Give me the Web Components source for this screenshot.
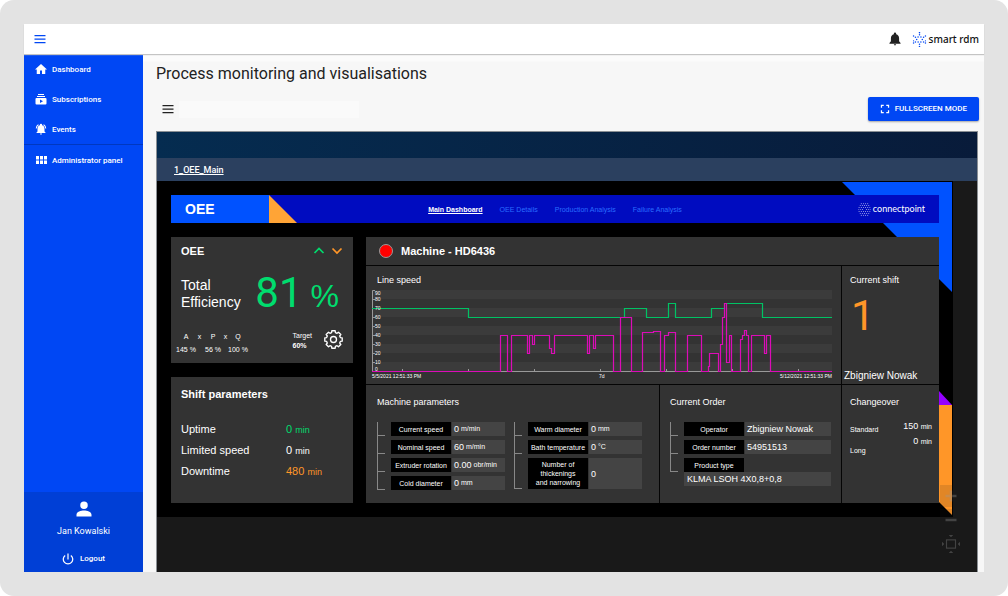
<!DOCTYPE html>
<html lang="en">
<head>
<meta charset="UTF-8">
<meta name="viewport" content="width=device-width, initial-scale=1">
<title>Process monitoring and visualisations</title>
<style>
    body {
        margin: 0;
        background: #fff;
        font-family: Roboto, 'Noto Sans', sans-serif;
    }
</style>
</head>
<body>
<app-shell>
    <top-bar slot="header"></top-bar>
    <side-nav slot="nav">
        <nav-item icon="home">Dashboard</nav-item>
        <nav-item icon="subscriptions">Subscriptions</nav-item>
        <nav-item icon="events">Events</nav-item>
        <nav-item icon="grid" divided>Administrator panel</nav-item>
    </side-nav>
    <page-toolbar heading="Process monitoring and visualisations"></page-toolbar>
    <scada-viewer tab="1_OEE_Main">
        <oee-banner heading="OEE"></oee-banner>
        <div-split>
            <efficiency-card slot="side" value="81" target="60%"></efficiency-card>
            <shift-card slot="side"></shift-card>
            <machine-panel name="Machine - HD6436">
                <trend-chart slot="chart"></trend-chart>
                <shift-info slot="shift" number="1" operator="Zbigniew Nowak"></shift-info>
                <param-list slot="params" rows='[["Current speed","0","m/min"],["Nominal speed","60","m/min"],["Extruder rotation","0.00","obr/min"],["Cold diameter","0","mm"]]'></param-list>
                <param-list slot="params" rows='[["Warm diameter","0","mm"],["Bath temperature","0","°C"],["Number of\nthickenings\nand narrowing","0",""]]'></param-list>
                <param-list slot="order" rows='[["Operator","Zbigniew Nowak",""],["Order number","54951513",""],["Product type",null,""]]' note="KLMA LSOH 4X0,8+0,8"></param-list>
                <changeover-info slot="changeover"></changeover-info>
            </machine-panel>
        </div-split>
    </scada-viewer>
</app-shell>

<script>
// Outline of a cog wheel with eight soft teeth
function gearPath() {
    const points = [];
    for (let i = 0; i < 8; i++) {
        const a = i * Math.PI / 4;
        [[-0.27, 9], [-0.19, 11.2], [0.19, 11.2], [0.27, 9]].forEach(([d, r]) => {
            points.push(`${(12 + r * Math.cos(a + d)).toFixed(2)} ${(12 + r * Math.sin(a + d)).toFixed(2)}`);
        });
    }
    return `M${points.join('L')}z`;
}

// Icon paths on a 24px grid
const ICONS = {
    menu: '<path d="M1 4h22v2.500H1zM1 11h22v2.500H1zM1 18h22v2.500H1z"/>',
    home: '<path d="M10 22v-7h4v7h6.500v-9H24L12 2 0 13h3.500v9z"/>',
    subscriptions: '<path d="M20 8H4V6h16zm-2-6H6v2h12zm5 10v9a2 2 0 0 1-2 2H3a2 2 0 0 1-2-2v-9a2 2 0 0 1 2-2h18a2 2 0 0 1 2 2zm-7 4.500-6-3.300v6.600z"/>',
    events: '<path d="M7.580 4.080 6.150 2.650A10.500 10.500 0 0 0 1.500 11h2a8.400 8.400 0 0 1 4.080-6.920zM20.500 11h2a10.500 10.500 0 0 0-4.650-8.350l-1.430 1.430A8.500 8.500 0 0 1 20.500 11zM19 11.500c0-3.400-1.600-6.200-4.800-7V3.500a2.200 2.200 0 0 0-4.400 0v1C6.600 5.300 5 8.100 5 11.500V17l-2 2v1h18v-1l-2-2zM12 23.500a2.200 2.200 0 0 0 2.100-2.300H9.900A2.200 2.200 0 0 0 12 23.500z"/>',
    grid: '<path d="M2 4h6v7H2zM10 4h6v7h-6zM18 4h6v7h-6zM2 13h6v7H2zM10 13h6v7h-6zM18 13h6v7h-6z"/>',
    bell: '<path d="M12 23a2 2 0 0 0 2-2h-4a2 2 0 0 0 2 2zm7-7v-5.500c0-3.300-1.800-6-5-6.800V3a2 2 0 0 0-4 0v.7c-3.200.8-5 3.500-5 6.800V16l-2.500 3v1h19v-1z"/>',
    user: '<path d="M12 12a5 5 0 1 0 0-10 5 5 0 0 0 0 10zm0 2c-4 0-10 1.800-10 5.500V22h20v-2.500C22 15.800 16 14 12 14z"/>',
    power: '<path d="M13.200 1h-2.400v12h2.400zm5.300 3-1.600 1.800a8.200 8.200 0 1 1-9.800 0L5.500 4a10.700 10.700 0 1 0 13 0z"/>',
    fullscreen: '<path d="M2 2h7v3H5v4H2zM15 2h7v7h-3V5h-4zM2 15h3v4h4v3H2zM19 15h3v7h-7v-3h4z"/>',
    up: '<path d="M3 16 12 7l9 9" fill="none" stroke="currentColor" stroke-width="3.500"/>',
    down: '<path d="m3 7 9 9 9-9" fill="none" stroke="currentColor" stroke-width="3.500"/>',
    gear: `<g fill="none" stroke="currentColor" stroke-width="1.700" stroke-linejoin="round"><circle cx="12" cy="12" r="3.800"/><path d="${gearPath()}"/></g>`,
    plus: '<path d="M9.500 1h5v8.500H23v5h-8.500V23h-5v-8.500H1v-5h8.500z"/>',
    minus: '<path d="M1 9.500h22v5H1z"/>',
    fit: '<rect x="6" y="6.500" width="12" height="11" fill="none" stroke="currentColor" stroke-width="1.500"/><path d="M9 0h6l-3 3zM9 24h6l-3-3zM0 9v6l3-3zM24 9v6l-3-3z"/>'
};

// Shared by every element below: fills an open shadow root with markup
class BaseElement extends HTMLElement {
    constructor() {
        super();
        this.attachShadow({ mode: 'open' });
    }
    connectedCallback() {
        this.shadowRoot.innerHTML = this.render();
    }
}

class UiIcon extends BaseElement {
    render() {
        return `
            <style>
                :host { display: inline-block; width: 12px; height: 12px; flex-shrink: 0; }
                svg { display: block; width: 100%; height: 100%; fill: currentColor; }
            </style>
            <svg viewBox="0 0 24 24" aria-hidden="true">${ICONS[this.getAttribute('name')]}</svg>
        `;
    }
}

// Hexagonal dot mark, used in both brand logos
class DotMark extends BaseElement {
    render() {
        const dense = this.hasAttribute('dense');
        const dots = [];
        if (dense) {
            for (let row = -3; row <= 3; row++) {
                for (let col = -3; col <= 3; col++) {
                    const x = col * 4 + (row % 2 ? 2 : 0);
                    const y = row * 3.6;
                    if (Math.abs(x) + Math.abs(y) * 0.58 < 13 && Math.abs(x) + Math.abs(y) > 3) {
                        dots.push([x, y, 0.9]);
                    }
                }
            }
        } else {
            for (let i = 0; i < 6; i++) {
                const a = Math.PI / 2 + i * Math.PI / 3;
                const b = a + Math.PI / 6;
                dots.push([11 * Math.cos(a), 11 * Math.sin(a), 1.2]);
                dots.push([7.5 * Math.cos(a), 7.5 * Math.sin(a), 1.2]);
                dots.push([4.5 * Math.cos(b), 4.5 * Math.sin(b), 1.2]);
            }
            dots.push([-9.5, 2, 1], [9.5, 2, 1]);
        }
        return `
            <style>
                :host { display: inline-block; width: 15px; height: 15px; flex-shrink: 0; }
                svg { display: block; width: 100%; height: 100%; fill: currentColor; }
            </style>
            <svg viewBox="-12 -12 24 24" aria-hidden="true">
                ${dots.map(d => `<circle cx="${d[0].toFixed(1)}" cy="${d[1].toFixed(1)}" r="${d[2]}"/>`).join('')}
            </svg>
        `;
    }
}

class AppShell extends BaseElement {
    render() {
        return `
            <style>
                :host {
                    display: flex;
                    box-sizing: border-box;
                    min-height: 100vh;
                    padding: 24px;
                    background: #e3e3e3;
                    border-radius: 14px;
                }
                .app {
                    flex: 1;
                    display: flex;
                    flex-direction: column;
                    min-width: 0;
                    background: #f7f7f7;
                }
                .body { flex: 1; display: flex; }
                main {
                    flex: 1;
                    display: flex;
                    flex-direction: column;
                    min-width: 0;
                    padding: 0 6px 0 13px;
                    background: linear-gradient(#fbfbfb 7px, #f7f7f7 8px);
                }
            </style>
            <div class="app">
                <slot name="header"></slot>
                <div class="body">
                    <slot name="nav"></slot>
                    <main><slot></slot></main>
                </div>
            </div>
        `;
    }
}

class TopBar extends BaseElement {
    render() {
        return `
            <style>
                :host {
                    display: flex;
                    align-items: center;
                    height: 30px;
                    padding: 0 5px 0 10px;
                    background: #fff;
                    box-shadow: 0 1px 1px #c4c4c4;
                    position: relative;
                }
                button {
                    display: flex;
                    padding: 0;
                    border: 0;
                    background: none;
                    color: #0047f4;
                }
                .menu { margin-right: auto; }
                .bell { color: #222; margin-right: 10px; }
                .bell ui-icon { width: 14px; height: 14px; }
                .brand {
                    display: flex;
                    align-items: center;
                    gap: 2px;
                    color: #111;
                    font: 500 10px/14px 'Noto Sans', sans-serif;
                    text-decoration: none;
                }
                dot-mark { color: #0047f4; }
            </style>
            <button class="menu" aria-label="Menu"><ui-icon name="menu"></ui-icon></button>
            <button class="bell" aria-label="Notifications"><ui-icon name="bell"></ui-icon></button>
            <a class="brand" href="#"><dot-mark></dot-mark>smart rdm</a>
        `;
    }
}

class SideNav extends BaseElement {
    render() {
        return `
            <style>
                :host {
                    display: flex;
                    flex-direction: column;
                    width: 119px;
                    flex-shrink: 0;
                    background: #0047f4;
                    color: #fff;
                }
                nav { flex: 1; }
                .account {
                    display: flex;
                    flex-direction: column;
                    align-items: center;
                    height: 80px;
                    background: #003fd6;
                    font-size: 9px;
                    line-height: 12px;
                }
                .account ui-icon { width: 18px; height: 18px; margin: 8px 0 7px; }
                button {
                    display: flex;
                    align-items: center;
                    gap: 6px;
                    margin-top: 16px;
                    padding: 0;
                    border: 0;
                    background: none;
                    color: inherit;
                    font: 500 8px/12px Roboto, sans-serif;
                }
                .account button ui-icon { width: 12px; height: 12px; margin: 0; }
            </style>
            <nav><slot></slot></nav>
            <div class="account">
                <ui-icon name="user"></ui-icon>
                <span>Jan Kowalski</span>
                <button><ui-icon name="power"></ui-icon>Logout</button>
            </div>
        `;
    }
}

class NavItem extends BaseElement {
    render() {
        return `
            <style>
                :host { display: block; }
                :host([divided]) { border-top: 1px solid #0038c0; }
                a {
                    display: flex;
                    align-items: center;
                    gap: 5px;
                    height: 30px;
                    padding-left: 11px;
                    color: #fff;
                    font-size: 8px;
                    font-weight: 500;
                    text-decoration: none;
                }
            </style>
            <a href="#"><ui-icon name="${this.getAttribute('icon')}"></ui-icon><slot></slot></a>
        `;
    }
}

class PageToolbar extends BaseElement {
    render() {
        return `
            <style>
                :host { display: block; }
                h1 {
                    margin: 10px 0 13px;
                    font-size: 16px;
                    font-weight: 400;
                    line-height: 20px;
                    color: #222;
                }
                .row {
                    display: flex;
                    align-items: center;
                    margin: 0 -1px 10px 0;
                }
                button { display: flex; align-items: center; border: 0; }
                .menu { padding: 0 5px 0 6px; background: none; color: #222; }
                input {
                    width: 180px;
                    height: 17px;
                    box-sizing: border-box;
                    border: 0;
                    background: #fafafa;
                }
                .full {
                    gap: 5px;
                    height: 24px;
                    margin-left: auto;
                    padding: 0 12px;
                    border-radius: 2px;
                    background: #0047f4;
                    box-shadow: 0 1px 2px #0005;
                    color: #fff;
                    font: 500 8px/12px Roboto, sans-serif;
                }
                .full ui-icon { width: 10px; height: 10px; }
            </style>
            <h1>${this.getAttribute('heading')}</h1>
            <div class="row">
                <button class="menu" aria-label="Views"><ui-icon name="menu"></ui-icon></button>
                <input type="text" aria-label="View name">
                <button class="full"><ui-icon name="fullscreen"></ui-icon>FULLSCREEN MODE</button>
            </div>
        `;
    }
}

class ScadaViewer extends BaseElement {
    render() {
        return `
            <style>
                :host {
                    flex: 1;
                    display: block;
                    position: relative;
                    border: 1px solid #8a8f94;
                    border-bottom: 0;
                    background: #191919;
                    font-family: 'Liberation Sans', Arial, sans-serif;
                    color: #fff;
                }
                .head { height: 26px; background: linear-gradient(90deg, #052c50, #081b3a); }
                .tabs {
                    display: flex;
                    align-items: center;
                    height: 23px;
                    padding-left: 17px;
                    background: #2b405f;
                }
                .tabs a { color: #fff; font: 500 9px/12px Roboto, sans-serif; }
                .canvas {
                    position: relative;
                    margin-right: 24px;
                    padding: 14px;
                    background: #000;
                }
                /* decorative corners that run behind the panels */
                .corner {
                    position: absolute;
                    right: 1px;
                    top: 1px;
                    width: 110px;
                    height: 110px;
                    background: #0052ff;
                    clip-path: polygon(0 0, 100% 0, 100% 100%);
                }
                .tip, .strip { position: absolute; right: 1px; width: 13px; }
                .tip {
                    bottom: 112px;
                    height: 14px;
                    background: #9500ff;
                    clip-path: polygon(0 0, 100% 100%, 0 100%);
                }
                .strip {
                    bottom: 2px;
                    height: 110px;
                    background: #ff9628;
                    clip-path: polygon(0 0, 100% 0, 100% 100%, 0 97px);
                }
                .content { position: relative; }
                .zoom {
                    position: absolute;
                    right: 15px;
                    bottom: 17px;
                    display: flex;
                    flex-direction: column;
                    gap: 2px;
                }
                .zoom button {
                    display: flex;
                    align-items: center;
                    justify-content: center;
                    width: 22px;
                    height: 22px;
                    padding: 0;
                    border: 0;
                    background: #1c1c1c22;
                    color: #9995;
                }
                .zoom .fit ui-icon { width: 18px; height: 18px; }
            </style>
            <div class="head"></div>
            <div class="tabs"><a href="#">${this.getAttribute('tab')}</a></div>
            <div class="canvas">
                <div class="corner"></div>
                <div class="tip"></div>
                <div class="strip"></div>
                <div class="content"><slot></slot></div>
            </div>
            <div class="zoom">
                <button aria-label="Zoom in"><ui-icon name="plus"></ui-icon></button>
                <button aria-label="Zoom out"><ui-icon name="minus"></ui-icon></button>
                <button class="fit" aria-label="Fit to screen"><ui-icon name="fit"></ui-icon></button>
            </div>
        `;
    }
}

class OeeBanner extends BaseElement {
    render() {
        return `
            <style>
                :host {
                    display: grid;
                    grid-template-columns: 1fr auto 1fr;
                    align-items: center;
                    height: 28px;
                    margin-bottom: 14px;
                    background: #000cc0;
                }
                .title { display: flex; }
                h2 {
                    width: 84px;
                    margin: 0;
                    padding-left: 14px;
                    background: #0052ff;
                    font-size: 14px;
                    line-height: 28px;
                }
                .wedge {
                    width: 28px;
                    height: 28px;
                    background: #ffa436;
                    clip-path: polygon(0 0, 100% 100%, 0 100%);
                }
                nav { display: flex; gap: 17px; font-size: 7px; }
                nav a { color: #2a6cff; text-decoration: none; }
                nav .active { color: #fff; font-weight: 700; text-decoration: underline; }
                .brand {
                    display: flex;
                    align-items: center;
                    justify-content: flex-end;
                    gap: 2px;
                    padding-right: 14px;
                    font: 400 9px/12px Lato, sans-serif;
                }
                dot-mark { width: 13px; height: 13px; }
            </style>
            <div class="title"><h2>${this.getAttribute('heading')}</h2><div class="wedge"></div></div>
            <nav>
                <a class="active" href="#">Main Dashboard</a>
                <a href="#">OEE Details</a>
                <a href="#">Production Analysis</a>
                <a href="#">Failure Analysis</a>
            </nav>
            <div class="brand"><dot-mark dense></dot-mark>connectpoint</div>
        `;
    }
}

class DivSplit extends BaseElement {
    render() {
        return `
            <style>
                :host {
                    display: grid;
                    grid-template-columns: 182fr 573fr;
                    gap: 13px;
                }
                .side { display: grid; grid-auto-rows: 1fr; gap: 14px; }
            </style>
            <div class="side"><slot name="side"></slot></div>
            <slot></slot>
        `;
    }
}

class EfficiencyCard extends BaseElement {
    render() {
        return `
            <style>
                :host {
                    display: flex;
                    flex-direction: column;
                    padding: 7px 10px;
                    background: #333;
                }
                header { display: flex; align-items: center; gap: 6px; }
                h3 { margin: 0 auto 0 0; font-size: 11px; line-height: 14px; }
                .up { color: #00dc6e; }
                .down { color: #ff9628; }
                .total {
                    display: flex;
                    align-items: center;
                    justify-content: space-between;
                    height: 72px;
                    padding-right: 4px;
                    font-size: 14px;
                    line-height: 17px;
                }
                .value { display: flex; align-items: baseline; gap: 8px; color: #00dc6e; line-height: 40px; }
                .value b { font: 400 42px/40px Roboto, sans-serif; }
                .value span { font-size: 32px; }
                footer { display: flex; align-items: flex-start; font-size: 7px; line-height: 13px; }
                .factors {
                    display: grid;
                    grid-template-columns: 20px 7px 20px 5px 20px;
                    margin: 0 auto 0 -5px;
                    text-align: center;
                    white-space: nowrap;
                }
                .factors span:nth-child(n+6) { grid-row: 2; }
                .target { line-height: 10px; margin: 1px 12px 0 0; }
                .target b { display: block; }
                .gear { width: 19px; height: 19px; }
            </style>
            <header>
                <h3>OEE</h3>
                <ui-icon class="up" name="up"></ui-icon>
                <ui-icon class="down" name="down"></ui-icon>
            </header>
            <div class="total">
                <div>Total<br>Efficiency</div>
                <div class="value"><b>${this.getAttribute('value')}</b><span>%</span></div>
            </div>
            <footer>
                <div class="factors">
                    <span>A</span><span>x</span><span>P</span><span>x</span><span>Q</span>
                    <span style="grid-column: 1">145 %</span><span style="grid-column: 3">56 %</span><span style="grid-column: 5">100 %</span>
                </div>
                <div class="target">Target<b>${this.getAttribute('target')}</b></div>
                <ui-icon class="gear" name="gear"></ui-icon>
            </footer>
        `;
    }
}

class ShiftCard extends BaseElement {
    render() {
        return `
            <style>
                :host { display: block; padding: 10px; background: #333; }
                h3 { margin: 0 0 18px; font-size: 11px; line-height: 14px; }
                dl {
                    display: grid;
                    grid-template-columns: 105fr 57fr;
                    margin: 0;
                    font-size: 11px;
                    line-height: 21px;
                }
                dd { margin: 0; }
                small { font-size: 9px; line-height: 10px; }
                .good { color: #00dc6e; }
                .bad { color: #ff9628; }
            </style>
            <h3>Shift parameters</h3>
            <dl>
                <dt>Uptime</dt><dd class="good">0 <small>min</small></dd>
                <dt>Limited speed</dt><dd>0 <small>min</small></dd>
                <dt>Downtime</dt><dd class="bad">480 <small>min</small></dd>
            </dl>
        `;
    }
}

class MachinePanel extends BaseElement {
    render() {
        return `
            <style>
                :host {
                    display: grid;
                    grid-template-columns: 293fr 181fr 97fr;
                    grid-template-rows: 28px minmax(118px, auto) minmax(118px, auto);
                    gap: 1px;
                    background: #050505;
                    min-width: 0;
                }
                header, section { background: #333; min-width: 0; }
                header {
                    grid-column: 1 / -1;
                    display: flex;
                    align-items: center;
                    gap: 8px;
                    padding-left: 13px;
                }
                .lamp {
                    width: 12px;
                    height: 12px;
                    border: 1px solid #999;
                    border-radius: 50%;
                    background: #f00;
                }
                h3 { margin: 0; font-size: 11px; line-height: 14px; }
                h4 { margin: 0; font-size: 9px; font-weight: 400; line-height: 12px; }
                section { padding: 11px 17px 0 11px; }
                section.chart { grid-column: 1 / 3; padding: 8px 8px 0 6px; }
                .chart h4 { padding-left: 5px; }
                section.shift { display: flex; flex-direction: column; padding: 8px 2px 2px; }
                .shift h4 { padding-left: 6px; }
                section.order { padding: 11px 10px 0; }
                section.changeover { padding: 11px 7px 0 8px; }
                .params { display: flex; gap: 9px; margin-top: 14px; }
            </style>
            <header><span class="lamp"></span><h3>${this.getAttribute('name')}</h3></header>
            <section class="chart"><h4>Line speed</h4><slot name="chart"></slot></section>
            <section class="shift"><h4>Current shift</h4><slot name="shift"></slot></section>
            <section><h4>Machine parameters</h4><div class="params"><slot name="params"></slot></div></section>
            <section class="order"><h4>Current Order</h4><div class="params"><slot name="order"></slot></div></section>
            <section class="changeover"><h4>Changeover</h4><slot name="changeover"></slot></section>
        `;
    }
}

class TrendChart extends BaseElement {
    render() {
        const bands = [0, 18, 36, 54, 72].map(y => `<rect x="0" y="${y}" width="460" height="9"/>`).join('');
        const ticks = [9, 18, 27, 36, 45, 54, 63, 72].map(y => `M0 ${y}.500h3`).join('');
        const days = [30, 96, 162, 228, 294, 360, 426].map(x => `M${x}.500 79v3`).join('');
        const labels = [90, 80, 70, 60, 50, 40, 30, 20, 10, 0].map((v, i) => {
            // the first and the last label are pulled inside the plot
            const y = v === 90 ? 5 : v === 0 ? 81 : i * 9 + 2;
            return `<text x="3" y="${y}">${v}</text>`;
        }).join('');
        return `
            <style>
                :host { display: block; padding-top: 4px; }
                svg { display: block; width: 100%; overflow: visible; }
                text { font-size: 5px; fill: #fff; }
                path { fill: none; }
                .line { stroke-width: 1.2; }
            </style>
            <svg viewBox="0 0 461 90" role="img" aria-label="Line speed trend">
                <g fill="#3b3b3b">${bands}</g>
                <path stroke="#999" d="M3 .5H.5V81.500H460${ticks}${days}"/>
                <path class="line" stroke="#00c264" d="M0 18.500H96.500V27.500H252.500V18.500H274.500V27.500H296.500V13.500H303.500V27.500H339.500V18.500H352.500V13.500H390.500V27.500H460"/>
                <path class="line" stroke="#dc0cb8" d="M0 81.500H128.500V45.500H135.500V81.500H139.500V45.500H155.500V63.500H157.500V45.500H160.500V54.500H162.500V45.500H177.500V58.500H179.500V63.500H182.500V45.500H215.500V63.500H217.500V45.500H221.500V58.500H223.500V45.500H241.500V81.500H248.500V27.500H259.500V81.500H270.500V42.500H281.500V41.500H288.500V81.500H292.500V45.500H296.500V42.500H303.500V81.500H315.500V45.500H329.500V81.500H336.500V76.500H337.500V63.500H346.500V81.500H348.500V54.500H350.500V27.500H352.500V13.500H354.500V72.500H357.500V45.500H359.500V81.500H368.500V49.500H370.500V45.500H372.500V40.500H374.500V45.500H376.500V81.500H379.500V45.500H392.500V63.500H394.500V45.500H398.500V81.500H460"/>
                ${labels}
                <text x="0" y="88">5/5/2021 12:51:33 PM</text>
                <text x="227" y="88">7d</text>
                <text x="460" y="88" text-anchor="end">5/12/2021 12:51:33 PM</text>
            </svg>
        `;
    }
}

class ShiftInfo extends BaseElement {
    render() {
        return `
            <style>
                :host { flex: 1; display: flex; flex-direction: column; justify-content: space-between; }
                .number { padding: 10px 0 0 7px; color: #ff9628; font: 400 42px/40px Roboto, sans-serif; }
                .name { font-size: 10px; line-height: 12px; }
            </style>
            <div class="number">${this.getAttribute('number')}</div>
            <div class="name">${this.getAttribute('operator')}</div>
        `;
    }
}

// Tree-like list of label/value pairs
class ParamList extends BaseElement {
    render() {
        const rows = JSON.parse(this.getAttribute('rows') || '[]');
        const note = this.getAttribute('note');
        const rowsHtml = rows.map(([label, value, unit]) => `
            <div class="row">
                <dt>${label}</dt>
                ${value === null ? '' : `<dd>${value} <small>${unit}</small></dd>`}
            </div>
        `).join('');
        return `
            <style>
                :host { display: block; flex: 1; min-width: 0; }
                dl {
                    display: flex;
                    flex-direction: column;
                    gap: 4px;
                    margin: 0;
                    border-left: 1px solid #888;
                    padding-left: 13px;
                }
                .row { display: flex; gap: 1px; position: relative; }
                /* branch line to the left of every row */
                .row::before {
                    content: "";
                    width: 7px;
                    position: absolute;
                    left: -13px;
                    bottom: 0;
                    border-bottom: 1px solid #888;
                }
                dt {
                    box-sizing: border-box;
                    display: flex;
                    align-items: center;
                    justify-content: center;
                    width: 60px;
                    min-height: 14px;
                    padding: 2px 0;
                    background: #000;
                    font-size: 7px;
                    line-height: 9px;
                    text-align: center;
                    white-space: pre-line;
                }
                dd {
                    flex: 1;
                    display: flex;
                    align-items: center;
                    gap: 2px;
                    margin: 0;
                    padding-left: 2px;
                    background: #444;
                    font-size: 9px;
                    line-height: 14px;
                    white-space: nowrap;
                }
                small { font-size: 7px; }
                p {
                    margin: 0 0 0 14px;
                    padding-left: 3px;
                    background: #444;
                    font-size: 9px;
                    line-height: 14px;
                }
            </style>
            <dl>${rowsHtml}</dl>
            ${note ? `<p>${note}</p>` : ''}
        `;
    }
}

class ChangeoverInfo extends BaseElement {
    render() {
        return `
            <style>
                :host {
                    display: flex;
                    justify-content: space-between;
                    padding-top: 11px;
                    font-size: 7px;
                }
                .names { line-height: 21px; }
                .times { line-height: 15px; text-align: right; font-size: 9px; }
                small { font-size: 7px; line-height: 8px; }
            </style>
            <div class="names">Standard<br>Long</div>
            <div class="times">150 <small>min</small><br>0 <small>min</small></div>
        `;
    }
}

customElements.define('ui-icon', UiIcon);
customElements.define('dot-mark', DotMark);
customElements.define('app-shell', AppShell);
customElements.define('top-bar', TopBar);
customElements.define('side-nav', SideNav);
customElements.define('nav-item', NavItem);
customElements.define('page-toolbar', PageToolbar);
customElements.define('scada-viewer', ScadaViewer);
customElements.define('oee-banner', OeeBanner);
customElements.define('div-split', DivSplit);
customElements.define('efficiency-card', EfficiencyCard);
customElements.define('shift-card', ShiftCard);
customElements.define('machine-panel', MachinePanel);
customElements.define('trend-chart', TrendChart);
customElements.define('shift-info', ShiftInfo);
customElements.define('param-list', ParamList);
customElements.define('changeover-info', ChangeoverInfo);
</script>
</body>
</html>
